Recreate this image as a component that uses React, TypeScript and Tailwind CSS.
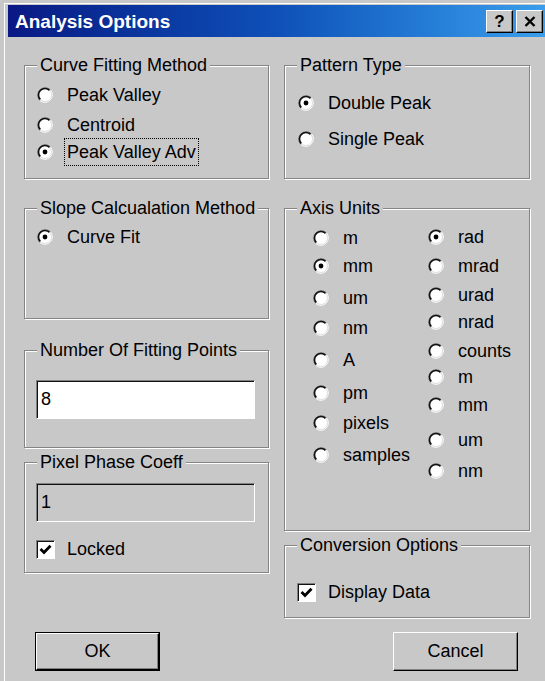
import type { ReactNode } from 'react';

const face = 'bg-[#c9c8c9]';

function GroupBox({
  title,
  className,
  children,
}: {
  title: string;
  className: string;
  children?: ReactNode;
}) {
  return (
    <div
      className={`border border-[#858585] shadow-[inset_1px_1px_0_#fff,1px_1px_0_#fff] ${className}`}
    >
      <div
        className={`-mt-[12px] ml-[12px] w-fit px-[3px] leading-[22px] whitespace-nowrap ${face}`}
      >
        {title}
      </div>
      {children}
    </div>
  );
}

function RadioDot({ checked }: { checked?: boolean }) {
  return (
    <svg width="16" height="16" viewBox="0 0 16 16" className="shrink-0">
      <circle cx="8" cy="8" r="6.5" fill="#fff" />
      <path d="M2.7 13.3 A7.5 7.5 0 0 1 13.3 2.7" fill="none" stroke="#7a7a7a" strokeWidth="1" />
      <path d="M2.7 13.3 A7.5 7.5 0 0 0 13.3 2.7" fill="none" stroke="#fff" strokeWidth="1" />
      <path d="M3.4 12.6 A6.5 6.5 0 0 1 12.6 3.4" fill="none" stroke="#111" strokeWidth="1.6" />
      <path d="M3.4 12.6 A6.5 6.5 0 0 0 12.6 3.4" fill="none" stroke="#e2e2e2" strokeWidth="1" />
      {checked && <circle cx="8" cy="8" r="2.4" fill="#000" />}
    </svg>
  );
}

function Radio({
  label,
  checked,
  className = '',
  focused,
}: {
  label: string;
  checked?: boolean;
  className?: string;
  focused?: boolean;
}) {
  return (
    <div className={`flex h-[22px] items-center gap-[14px] whitespace-nowrap ${className}`}>
      <RadioDot checked={checked} />
      {focused ? (
        <span className="-my-[3px] -ml-[3px] border border-dotted border-black px-[2px] leading-[26px]">
          {label}
        </span>
      ) : (
        <span className="leading-[22px]">{label}</span>
      )}
    </div>
  );
}

function CheckBox({ label, className = '' }: { label: string; className?: string }) {
  return (
    <div className={`flex items-center gap-[12px] ${className}`}>
      <div className="flex h-[19px] w-[19px] items-center justify-center border border-t-[#808080] border-l-[#808080] border-r-white border-b-white bg-white shadow-[inset_1px_1px_0_#111]">
        <svg width="13" height="13" viewBox="0 0 13 13">
          <path d="M1.5 6 L5 9.5 L11.5 2.8" fill="none" stroke="#000" strokeWidth="2.8" />
        </svg>
      </div>
      <span className="leading-[22px]">{label}</span>
    </div>
  );
}

function TextField({ value, disabled, className = '' }: { value: string; disabled?: boolean; className?: string }) {
  return (
    <div
      className={`flex h-[39px] w-[219px] items-center border border-t-[#808080] border-l-[#808080] border-r-white border-b-white pl-[4px] shadow-[inset_1px_1px_0_#111] ${
        disabled ? face : 'bg-white'
      } ${className}`}
    >
      {value}
    </div>
  );
}

const axisLeft = [
  { label: 'm', mt: 'mt-[8px]' },
  { label: 'mm', mt: 'mt-[6px]', checked: true },
  { label: 'um', mt: 'mt-[10px]' },
  { label: 'nm', mt: 'mt-[8px]' },
  { label: 'A', mt: 'mt-[10px]' },
  { label: 'pm', mt: 'mt-[11px]' },
  { label: 'pixels', mt: 'mt-[8px]' },
  { label: 'samples', mt: 'mt-[10px]' },
];

const axisRight = [
  { label: 'rad', mt: 'mt-[7px]', checked: true },
  { label: 'mrad', mt: 'mt-[7px]' },
  { label: 'urad', mt: 'mt-[7px]' },
  { label: 'nrad', mt: 'mt-[5px]' },
  { label: 'counts', mt: 'mt-[7px]' },
  { label: 'm', mt: 'mt-[4px]' },
  { label: 'mm', mt: 'mt-[6px]' },
  { label: 'um', mt: 'mt-[13px]' },
  { label: 'nm', mt: 'mt-[9px]' },
];

const bevel =
  'border border-t-white border-l-white border-r-black border-b-black shadow-[inset_-1px_-1px_0_#808080]';

export default function App() {
  return (
    <div
      className={`h-[681px] w-[545px] overflow-hidden pt-[3px] pl-[4px] font-['Liberation_Sans',Arial,sans-serif] text-[18px] text-black ${face}`}
    >
      <div className="h-full border-t border-l border-white">
        {/* caption */}
        <div className="mt-[1px] ml-[3px] flex h-[32px] items-center justify-between bg-gradient-to-r from-[#0a1884] via-[#0f50b8] to-[#3a9eec] pl-[7px] pr-[2px]">
          <span className="text-[19px] font-bold leading-none text-white">Analysis Options</span>
          <div className="flex gap-[3px]">
            <div className={`flex h-[23px] w-[27px] items-center justify-center text-[17px] font-bold leading-none ${face} ${bevel}`}>
              ?
            </div>
            <div className={`flex h-[23px] w-[27px] items-center justify-center ${face} ${bevel}`}>
              <svg width="12" height="11" viewBox="0 0 12 11">
                <path d="M1.5 1 L10.5 10 M10.5 1 L1.5 10" stroke="#000" strokeWidth="2.4" />
              </svg>
            </div>
          </div>
        </div>

        {/* option groups */}
        <div className="flex gap-[15px] pt-[28px] pl-[19px]">
          <div className="flex w-[245px] flex-col">
            <GroupBox title="Curve Fitting Method" className="h-[114px]">
              <Radio label="Peak Valley" className="mt-[8px] ml-[12px]" />
              <Radio label="Centroid" className="mt-[8px] ml-[12px]" />
              <Radio label="Peak Valley Adv" checked focused className="mt-[5px] ml-[12px]" />
            </GroupBox>
            <GroupBox title="Slope Calcualation Method" className="mt-[29px] h-[111px]">
              <Radio label="Curve Fit" checked className="mt-[7px] ml-[12px]" />
            </GroupBox>
            <GroupBox title="Number Of Fitting Points" className="mt-[31px] h-[98px]">
              <TextField value="8" className="mt-[19px] ml-[11px]" />
            </GroupBox>
            <GroupBox title="Pixel Phase Coeff" className="mt-[14px] h-[111px]">
              <TextField value="1" disabled className="mt-[10px] ml-[11px]" />
              <CheckBox label="Locked" className="mt-[16px] ml-[11px]" />
            </GroupBox>
          </div>

          <div className="flex w-[246px] flex-col">
            <GroupBox title="Pattern Type" className="h-[114px]">
              <Radio label="Double Peak" checked className="mt-[16px] ml-[13px]" />
              <Radio label="Single Peak" className="mt-[14px] ml-[13px]" />
            </GroupBox>
            <GroupBox title="Axis Units" className="mt-[29px] h-[323px]">
              <div className="flex pl-[28px]">
                <div className="flex w-[115px] flex-col">
                  {axisLeft.map((u) => (
                    <Radio key={u.label} label={u.label} checked={u.checked} className={u.mt} />
                  ))}
                </div>
                <div className="flex flex-col">
                  {axisRight.map((u) => (
                    <Radio key={u.label} label={u.label} checked={u.checked} className={u.mt} />
                  ))}
                </div>
              </div>
            </GroupBox>
            <GroupBox title="Conversion Options" className="mt-[14px] h-[73px]">
              <CheckBox label="Display Data" className="mt-[25px] ml-[12px]" />
            </GroupBox>
          </div>
        </div>

        {/* dialog buttons */}
        <div className="mt-[14px] flex gap-[233px] pl-[30px]">
          <div className="h-[39px] w-[125px] border border-black">
            <div className={`flex h-full items-center justify-center ${bevel}`}>OK</div>
          </div>
          <div className={`flex h-[39px] w-[125px] items-center justify-center ${bevel}`}>Cancel</div>
        </div>
      </div>
    </div>
  );
}
